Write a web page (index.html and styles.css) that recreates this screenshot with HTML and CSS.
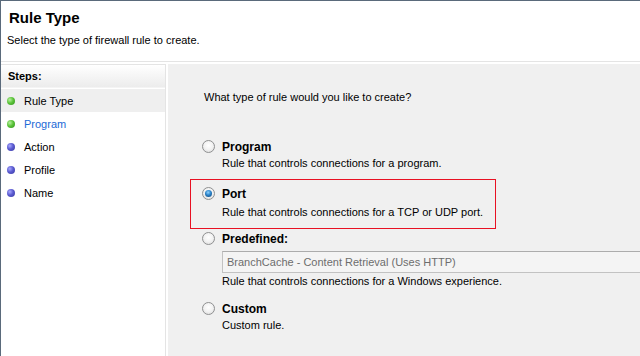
FILE: index.html
```html
<!DOCTYPE html>
<html>

<head>
  <title>New Inbound Rule Wizard</title>

  <link rel="stylesheet" href="styles.css">
</head>

<body>
  <div class="wizard">
    <!-- Page header -->
    <div class="wizard-header">
      <h1>Rule Type</h1>
      <p>Select the type of firewall rule to create.</p>
    </div>

    <div class="wizard-main">
      <!-- Steps list -->
      <div class="steps">
        <div class="steps-title">Steps:</div>
        <ul class="steps-list">
          <li class="step step--done step--current"><span class="dot"></span>Rule Type</li>
          <li class="step step--done step--link"><span class="dot"></span>Program</li>
          <li class="step"><span class="dot"></span>Action</li>
          <li class="step"><span class="dot"></span>Profile</li>
          <li class="step"><span class="dot"></span>Name</li>
        </ul>
      </div>

      <!-- Rule type options -->
      <div class="content">
        <p class="question">What type of rule would you like to create?</p>

        <div class="option option--program">
          <div class="option-title"><span class="radio"></span>Program</div>
          <div class="option-desc">Rule that controls connections for a program.</div>
        </div>

        <div class="option option--selected">
          <div class="option-title"><span class="radio radio--checked"></span>Port</div>
          <div class="option-desc">Rule that controls connections for a TCP or UDP port.</div>
        </div>

        <div class="option option--predefined">
          <div class="option-title"><span class="radio"></span>Predefined:</div>
          <div class="combo">BranchCache - Content Retrieval (Uses HTTP)</div>
          <div class="option-desc">Rule that controls connections for a Windows experience.</div>
        </div>

        <div class="option option--custom">
          <div class="option-title"><span class="radio"></span>Custom</div>
          <div class="option-desc">Custom rule.</div>
        </div>
      </div>
    </div>
  </div>
</body>

</html>
```

FILE: styles.css
```css
* {
  margin: 0;
  padding: 0;
  box-sizing: border-box;
}

:root {
  --frame: #5a6a7b;
  --pane: #f0f0f0;
  --line: #e4e4e4;
  --red: #e81123;
}

body {
  font-family: 'Liberation Sans', Arial, sans-serif;
  font-size: 11px;
  color: #000;
  background-color: #fff;
}

.wizard {
  height: 356px;
  border-top: 1px solid var(--frame);
  border-left: 1px solid var(--frame);
  display: flex;
  flex-direction: column;
  overflow: hidden;
}

.wizard-header {
  flex-shrink: 0;
  height: 61px;
  padding: 8px 0 0 8px;
  border-bottom: 1px solid var(--line);
}

.wizard-header h1 {
  font-size: 15px;
  font-weight: 700;
  line-height: 17px;
}

.wizard-header p {
  margin-top: 7px;
  margin-left: -2px;
  line-height: 15px;
}

.wizard-main {
  flex: 1;
  display: flex;
  padding-top: 2px;
}

/* Steps panel */
.steps {
  width: 165px;
  border-top: 1px solid var(--line);
  border-right: 1px solid var(--line);
  margin-right: 2px;
}

.steps-title {
  height: 23px;
  padding-left: 7px;
  line-height: 23px;
  font-weight: 700;
  background: linear-gradient(#ffffff, #ececec);
  border-bottom: 1px solid #f4f4f4;
}

.steps-list {
  list-style: none;
  padding-top: 1px;
}

.step {
  display: flex;
  align-items: center;
  height: 23px;
  padding-left: 6px;
}

.step--current {
  background-color: #efefef;
}

.step--link {
  color: #1c6ad6;
}

.dot {
  width: 8px;
  height: 8px;
  border-radius: 50%;
  margin-right: 9px;
  background: radial-gradient(circle at 35% 35%, #a9a9ff 0, #5a5ad0 45%, #3a3aa0 100%);
}

.step--done .dot {
  background: radial-gradient(circle at 35% 35%, #b8f0a0 0, #5cc43a 45%, #2f8f1e 100%);
}

/* Content pane */
.content {
  flex: 1;
  background-color: var(--pane);
  padding: 26px 0 0 22px;
}

.question {
  margin-left: 14px;
  line-height: 15px;
  margin-bottom: 32px;
}

.option {
  width: 306px;
  border: 1px solid transparent;
  padding: 0 11px;
  white-space: nowrap;
}

.option--selected {
  margin-top: 6px;
  padding-top: 5px;
  padding-bottom: 7px;
  border-color: var(--red);
}

.option--selected .option-desc {
  margin-top: 2px;
}

.option--custom {
  margin-top: 8px;
}

.option-title {
  display: flex;
  align-items: center;
  height: 17px;
  font-size: 12px;
  font-weight: 700;
}

.option-desc {
  padding-left: 20px;
  line-height: 17px;
}

.radio {
  width: 13px;
  height: 13px;
  border-radius: 50%;
  margin-right: 7px;
  border: 1px solid #8f9091;
  background: radial-gradient(circle at 50% 40%, #ffffff 0, #f2f2f2 50%, #d6d6d6 100%);
  display: flex;
  align-items: center;
  justify-content: center;
}

.radio--checked::after {
  content: '';
  width: 7px;
  height: 7px;
  border-radius: 50%;
  background: radial-gradient(circle at 45% 35%, #8fd2ff 0, #2a82c8 45%, #0f3f70 100%);
}

.combo {
  width: 440px;
  height: 22px;
  margin: 4px 0 0 20px;
  padding-left: 4px;
  line-height: 20px;
  color: #6d6d6d;
  background-color: #f4f4f4;
  border: 1px solid #c2c2c2;
  border-top-color: #acacac;
}
```
